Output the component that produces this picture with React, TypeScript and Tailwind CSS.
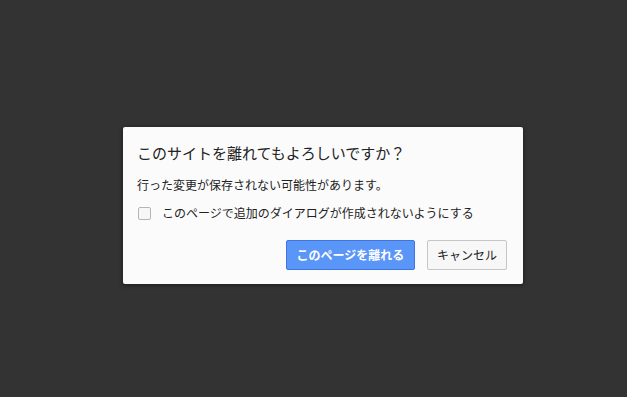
export default function App() {
    return (
        <div
            className="w-[627px] h-[397px] bg-[#333333] pt-[127px] pl-[123px]"
            style={{ fontFamily: '"Noto Sans CJK JP", "Noto Sans", sans-serif' }}
        >
            <div className="w-[400px] h-[157px] bg-[#fbfbfb] rounded-[2px] shadow-[0_1px_4px_rgba(0,0,0,0.5)] pt-[16px] pl-[14px] pr-[16px]">
                <h1 className="text-[15px] leading-[20px] text-[#222222]">このサイトを離れてもよろしいですか？</h1>
                <p className="mt-[14px] text-[12px] leading-[16px] text-[#222222]">行った変更が保存されない可能性があります。</p>
                <label className="mt-[12px] flex items-center h-[16px]">
                    <span className="ml-[1px] w-[13px] h-[13px] border border-[#b5b5b5] rounded-[2px] bg-[#f7f7f7]" />
                    <span className="ml-[11px] text-[12px] leading-[16px] text-[#222222]">このページで追加のダイアログが作成されないようにする</span>
                </label>
                <div className="mt-[19px] flex justify-end gap-[12px]">
                    <button className="w-[129px] h-[30px] rounded-[2px] border border-[#3d76e0] bg-[#5a95f8] text-white text-[12px] font-bold">
                        このページを離れる
                    </button>
                    <button className="w-[80px] h-[30px] rounded-[2px] border border-[#c6c6c6] bg-[#f7f7f7] text-[#222222] text-[12px]">
                        キャンセル
                    </button>
                </div>
            </div>
        </div>
    );
}
